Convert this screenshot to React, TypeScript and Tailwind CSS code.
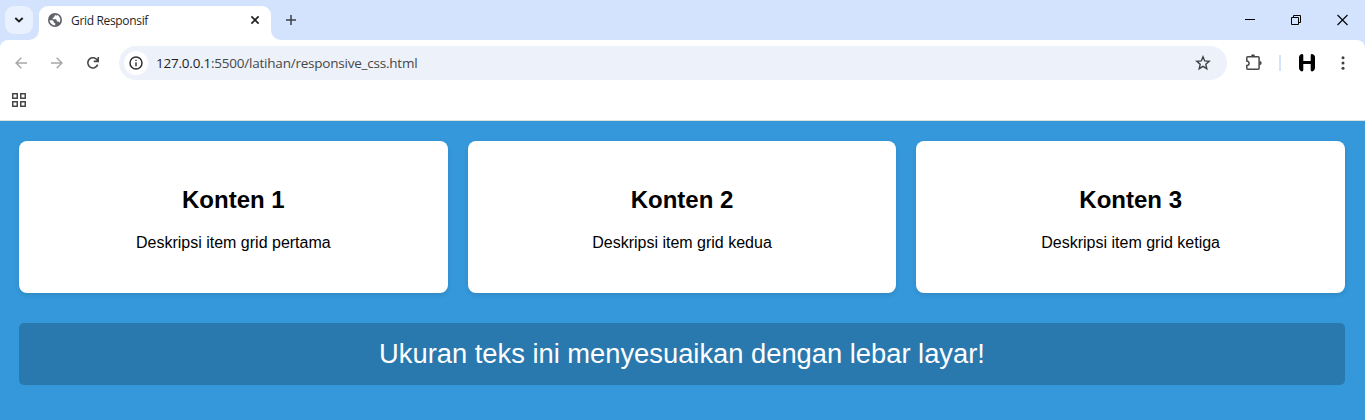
const UI_FONT = "font-['Open_Sans','Noto_Sans',sans-serif]";

function Globe() {
  return (
    <svg width="14" height="14" viewBox="0 0 14 14">
      <circle cx="7" cy="7" r="7" fill="#5f6368" />
      <path
        d="M7.6 1.6 6.3 3v1.3l-1.6.5v1.5h3.2l1 1.1v1.2h1.4l1.3.9A5.6 5.6 0 0 0 8.9 1.7l-.4 1.1-.9-.1zM1.5 7.3h2.9l1.5 1.5v1.3h1.3v2.4A5.6 5.6 0 0 1 1.5 7.3z"
        fill="#fff"
      />
    </svg>
  );
}

function TabStrip() {
  return (
    <div className="flex h-10 bg-[#d3e3fd]">
      <div className="ml-[5px] mt-[6px] flex h-7 w-7 items-center justify-center rounded-[9px] bg-[#e9f0fe]">
        <svg width="10" height="6" viewBox="0 0 10 6" fill="none" stroke="#1f1f1f" strokeWidth="1.9">
          <path d="M1.3 1 5 4.5 8.7 1" />
        </svg>
      </div>
      <svg className="mt-[6px] ml-[-4px]" width="10" height="34" viewBox="0 0 10 34">
        <path d="M10 24A10 10 0 0 1 0 34h10z" fill="#fff" />
      </svg>
      <div className="mt-[6px] flex h-[34px] w-[232px] items-center rounded-t-[9px] bg-white pb-[6px]">
        <div className="ml-[9px]"><Globe /></div>
        <span className={`${UI_FONT} ml-[9px] w-[178px] whitespace-nowrap pt-[2px] text-[12px] tracking-[-0.33px] text-[#1f1f1f]`}>
          Grid Responsif
        </span>
        <svg width="12" height="12" viewBox="0 0 12 12" fill="none" stroke="#1f1f1f" strokeWidth="1.6">
          <path d="m2.4 2.4 7.2 7.2m0-7.2L2.4 9.6" />
        </svg>
      </div>
      <svg className="mt-[6px]" width="10" height="34" viewBox="0 0 10 34">
        <path d="M0 24A10 10 0 0 0 10 34H0z" fill="#fff" />
      </svg>
      <svg className="ml-1 mt-[14px]" width="12" height="12" viewBox="0 0 12 12" fill="none" stroke="#3c4043" strokeWidth="1.5">
        <path d="M6 1v10M1 6h10" />
      </svg>
      <div className="ml-auto mr-[17px] mt-[14px] flex items-start">
        <svg className="mr-9" width="10" height="12" viewBox="0 0 10 12">
          <path d="M0 5h10v1H0z" fill="#000" />
        </svg>
        <svg className="mr-[36px]" width="10" height="12" viewBox="0 0 10 12" fill="none" stroke="#000">
          <path d="M.5 3.5h7v7h-7zM2.5 3V1.5h7v7H8" />
        </svg>
        <svg width="11" height="12" viewBox="0 0 11 12" fill="none" stroke="#000" strokeWidth="1.1">
          <path d="m.5 1 10 10m0-10-10 10" />
        </svg>
      </div>
    </div>
  );
}

function Toolbar() {
  return (
    <div className="bg-[#d3e3fd]">
      <div className="flex h-[46px] items-center rounded-t-[8px] bg-white">
        <svg className="ml-[15px]" width="12" height="12" viewBox="0 0 12 12" fill="none" stroke="#a8a8a8" strokeWidth="1.5">
          <path d="M12 6H1.2M6.3.8 1.1 6l5.2 5.2" />
        </svg>
        <svg className="ml-6" width="12" height="12" viewBox="0 0 12 12" fill="none" stroke="#a8a8a8" strokeWidth="1.5">
          <path d="M0 6h10.8M5.7.8 10.9 6l-5.2 5.2" />
        </svg>
        <svg className="ml-6" width="12" height="12" viewBox="0 0 12 12" fill="none" stroke="#474747" strokeWidth="1.6">
          <path d="M10.7 7.6A5.1 5.1 0 1 1 10.3 3.2l.8 1.1M11.2 0v4.4H6.7" />
        </svg>
        <div className="ml-5 flex h-[34px] w-[1108px] items-center rounded-full bg-[#ecf1fa] pl-[5px]">
          <div className="flex h-6 w-6 items-center justify-center rounded-full bg-white">
            <svg width="14" height="14" viewBox="0 0 14 14" fill="none">
              <circle cx="7" cy="7" r="6" stroke="#303134" strokeWidth="1.5" />
              <path d="M7 6.2v4M7 3.7v1.4" stroke="#303134" strokeWidth="1.4" />
            </svg>
          </div>
          <span className={`${UI_FONT} ml-2 whitespace-nowrap text-[13.5px] tracking-[-0.22px] text-[#474747]`}>
            <span className="text-[#1f1f1f]">127.0.0.1</span>:5500/latihan/responsive_css.html
          </span>
          <svg className="ml-auto mr-4" width="16" height="16" viewBox="0 0 16 16" fill="none" stroke="#3c4043" strokeWidth="1.4">
            <path d="m8 1.8 1.7 4.1 4.5.4-3.4 3 1 4.4L8 11.4l-3.8 2.3 1-4.4-3.4-3 4.5-.4z" />
          </svg>
        </div>
        <svg className="ml-[18px]" width="18" height="18" viewBox="0 0 18 18">
          <path
            d="M1.8 3.8a1 1 0 0 1 1-1h10.3a1 1 0 0 1 1 1v10.4a1 1 0 0 1-1 1H2.8a1 1 0 0 1-1-1v-2.6a2.3 2.3 0 0 0 0-4.6z"
            fill="none"
            stroke="#474747"
            strokeWidth="1.5"
          />
          <path d="M6 2.3a2 2 0 0 1 4 0zM14.6 7a2.1 2.1 0 0 1 0 4.2z" fill="#474747" />
        </svg>
        <div className="ml-4 h-4 w-[2px] bg-[#d3e3fd]" />
        <svg className="ml-[18px]" width="16" height="18" viewBox="0 0 16 18" fill="#000">
          <path d="M0 3.5Q0 .7 3 0q1.3 0 1.3 1.4V7h7.4V1.4Q11.7 0 13 0q3 .7 3 3.5v10q0 3.2-3 4-1.3 0-1.3-1.4V10H4.3v6.1q0 1.4-1.3 1.4-3-.8-3-4z" />
        </svg>
        <svg className="ml-[26px]" width="4" height="14" viewBox="0 0 4 14" fill="#3c4043">
          <circle cx="2" cy="1.7" r="1.5" />
          <circle cx="2" cy="7" r="1.5" />
          <circle cx="2" cy="12.3" r="1.5" />
        </svg>
      </div>
    </div>
  );
}

function BookmarksBar() {
  return (
    <div className="flex h-[35px] items-start border-b border-[#dadfe0] bg-white pl-3 pt-[7px]">
      <svg width="14" height="14" viewBox="0 0 14 14" fill="none" stroke="#474747" strokeWidth="1.5">
        <path d="M.75.75h4.5v4.5H.75zM8.75.75h4.5v4.5h-4.5zM.75 8.75h4.5v4.5H.75zM8.75 8.75h4.5v4.5h-4.5z" />
      </svg>
    </div>
  );
}

const items = [
  { title: "Konten 1", text: "Deskripsi item grid pertama" },
  { title: "Konten 2", text: "Deskripsi item grid kedua" },
  { title: "Konten 3", text: "Deskripsi item grid ketiga" },
];

export default function App() {
  return (
    <div className="flex h-[420px] w-[1365px] flex-col overflow-hidden">
      <TabStrip />
      <Toolbar />
      <BookmarksBar />
      <main className="flex-1 bg-[#3498db] pl-[19px] pr-5 pt-5 text-center font-['Liberation_Sans',Arial,sans-serif]">
        <div className="grid grid-cols-3 gap-5">
          {items.map((item) => (
            <section key={item.title} className="h-[152px] rounded-lg bg-white pt-[45px] text-black shadow-[0_2px_5px_rgba(0,0,0,0.1)]">
              <h2 className="text-[24px] font-bold leading-7">{item.title}</h2>
              <p className="mt-5 text-[16px] leading-[18px]">{item.text}</p>
            </section>
          ))}
        </div>
        <div className="mt-[30px] flex h-[62px] items-center justify-center rounded-[5px] bg-black/20 text-[27.32px] leading-8 text-white">
          Ukuran teks ini menyesuaikan dengan lebar layar!
        </div>
      </main>
    </div>
  );
}
